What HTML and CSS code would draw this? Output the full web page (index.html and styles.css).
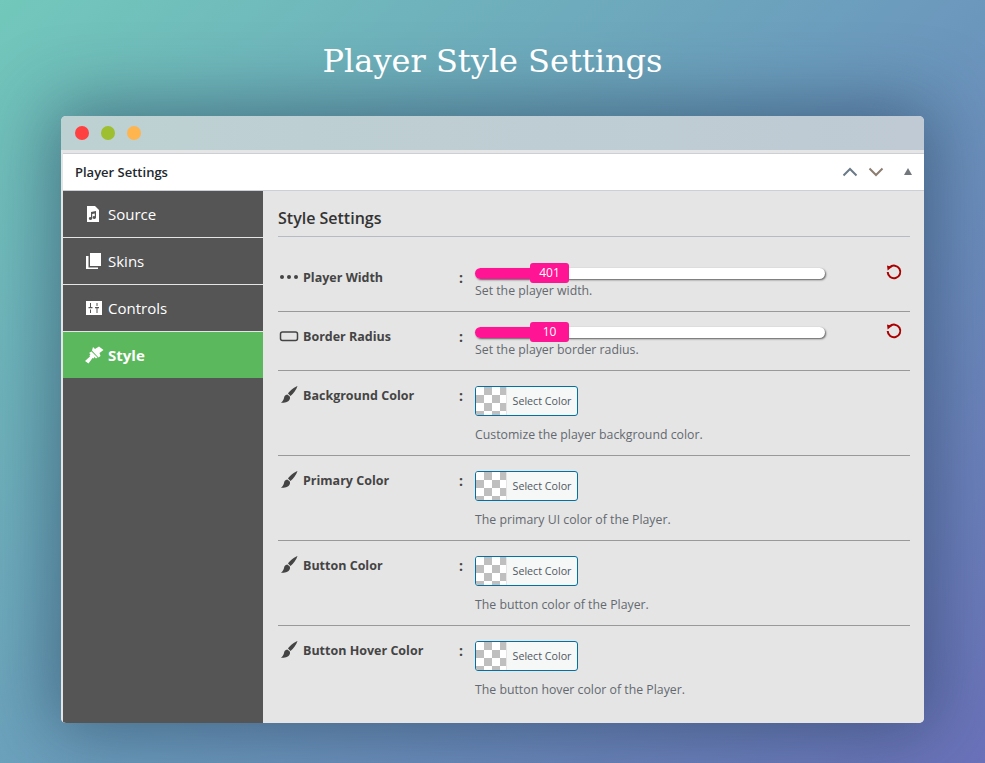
FILE: index.html
```html
<!DOCTYPE html>
<html>
  <head>
    <title>Player Style Settings</title>
    <link rel="stylesheet" href="styles.css">
  </head>
  <body>
    <h1 class="page-title">Player Style Settings</h1>
    <div class="window">
      <div class="titlebar">
        <span class="dot dot-red"></span>
        <span class="dot dot-green"></span>
        <span class="dot dot-yellow"></span>
      </div>
      <div class="panel">
        <div class="panel-head">
          <span class="panel-name">Player Settings</span>
          <svg class="arrow arrow-up" width="16" height="10" viewBox="0 0 16 10"><path d="M1.500 8.500 8 2l6.500 6.500" /></svg>
          <svg class="arrow arrow-down" width="16" height="10" viewBox="0 0 16 10"><path d="M1.500 1.500 8 8l6.500-6.500" /></svg>
          <span class="caret"></span>
        </div>
        <div class="panel-body">
          <ul class="menu">
            <li class="menu-item">
              <span class="menu-icon"><svg width="14" height="16" viewBox="0 0 14 16"><path class="white" d="M1 0h8l4 4v12H1z" /><path class="dark" d="M10 5 5 6v5.200a1.700 1.400 0 1 0 1.200 1.300V8l2.600-.6v2.800a1.700 1.400 0 1 0 1.200 1.300z" /></svg></span>
              Source
            </li>
            <li class="menu-item">
              <span class="menu-icon"><svg width="16" height="17" viewBox="0 0 16 17"><path class="white" d="M4 0h11v13H4z" /><path class="white" d="M0 3h2.500v11.500H12V16H0z" /></svg></span>
              Skins
            </li>
            <li class="menu-item">
              <span class="menu-icon"><svg width="16" height="14" viewBox="0 0 16 14"><path class="white" d="M0 0h16v14H0z" /><path class="dark" d="M4 2h1v4h1.500v1.300h-4V6H4zM4 8.500h1V12H4zM10.500 2h1v3h-1zM9 6h4v1.300h-1.500V12h-1V7.300H9z" /></svg></span>
              Controls
            </li>
            <li class="menu-item menu-active">
              <span class="menu-icon"><svg width="20" height="18" viewBox="0 0 20 18"><path class="white" d="M9 1 11 3l4-2.500L19.500 4l-4 3 1 3-2 1.500L8 4.500zM7.500 5.500l6 6-1.500 1-1.500-1.500-1 1.500-1-.5-4 5.500L1 15l5-4.500-.5-1 1-1.500L5 7z" /></svg></span>
              Style
            </li>
          </ul>
          <div class="content">
            <h2 class="content-title">Style Settings</h2>

            <div class="row row-slider row-first">
              <div class="label">
                <svg class="label-icon" width="20" height="14" viewBox="0 0 20 14"><circle cx="3" cy="7" r="2" /><circle cx="10" cy="7" r="2" /><circle cx="17" cy="7" r="2" /></svg>
                Player Width
              </div>
              <div class="colon">:</div>
              <div class="field">
                <div class="slider">
                  <div class="slider-fill"></div>
                  <div class="slider-handle">401</div>
                </div>
                <p class="desc desc-tight">Set the player width.</p>
              </div>
              <svg class="reset" width="18" height="18" viewBox="0 0 18 18"><path d="M4.600 4.400A6.300 6.300 0 1 1 2.700 9" /><path class="reset-tip" d="M2 2.500 7 4 2.600 7.500z" /></svg>
            </div>

            <div class="row row-slider">
              <div class="label">
                <svg class="label-icon" width="20" height="14" viewBox="0 0 20 14"><rect class="outline" x="1.500" y="3" width="17" height="8.500" rx="2" /></svg>
                Border Radius
              </div>
              <div class="colon">:</div>
              <div class="field">
                <div class="slider">
                  <div class="slider-fill"></div>
                  <div class="slider-handle">10</div>
                </div>
                <p class="desc desc-tight">Set the player border radius.</p>
              </div>
              <svg class="reset" width="18" height="18" viewBox="0 0 18 18"><path d="M4.600 4.400A6.300 6.300 0 1 1 2.700 9" /><path class="reset-tip" d="M2 2.500 7 4 2.600 7.500z" /></svg>
            </div>

            <div class="row row-color">
              <div class="label">
                <svg class="label-icon" width="20" height="18" viewBox="0 0 20 18"><path d="M18.500 0c-3 1-7.500 4.500-9.500 7.500l2.500 2.500c2.800-2.300 6-6.500 7-10zM8.300 8.500C6 8.700 5.300 10.200 5 12c-.3 1.800-1.400 3.300-3 5 3.500 0 7.300-.8 8.600-3.400.7-1.400.5-2.700 0-3.400z" /></svg>
                Background Color
              </div>
              <div class="colon">:</div>
              <div class="field">
                <div class="color-btn"><span class="swatch"></span><span class="color-text">Select Color</span></div>
                <p class="desc">Customize the player background color.</p>
              </div>
            </div>

            <div class="row row-color">
              <div class="label">
                <svg class="label-icon" width="20" height="18" viewBox="0 0 20 18"><path d="M18.500 0c-3 1-7.500 4.500-9.500 7.500l2.500 2.500c2.800-2.300 6-6.500 7-10zM8.300 8.500C6 8.700 5.300 10.200 5 12c-.3 1.800-1.400 3.300-3 5 3.500 0 7.300-.8 8.600-3.400.7-1.400.5-2.700 0-3.400z" /></svg>
                Primary Color
              </div>
              <div class="colon">:</div>
              <div class="field">
                <div class="color-btn"><span class="swatch"></span><span class="color-text">Select Color</span></div>
                <p class="desc">The primary UI color of the Player.</p>
              </div>
            </div>

            <div class="row row-color">
              <div class="label">
                <svg class="label-icon" width="20" height="18" viewBox="0 0 20 18"><path d="M18.500 0c-3 1-7.500 4.500-9.500 7.500l2.500 2.500c2.800-2.300 6-6.500 7-10zM8.300 8.500C6 8.700 5.300 10.200 5 12c-.3 1.800-1.400 3.300-3 5 3.500 0 7.300-.8 8.600-3.400.7-1.400.5-2.700 0-3.400z" /></svg>
                Button Color
              </div>
              <div class="colon">:</div>
              <div class="field">
                <div class="color-btn"><span class="swatch"></span><span class="color-text">Select Color</span></div>
                <p class="desc">The button color of the Player.</p>
              </div>
            </div>

            <div class="row row-color row-last">
              <div class="label">
                <svg class="label-icon" width="20" height="18" viewBox="0 0 20 18"><path d="M18.500 0c-3 1-7.500 4.500-9.500 7.500l2.500 2.500c2.800-2.300 6-6.500 7-10zM8.300 8.500C6 8.700 5.300 10.200 5 12c-.3 1.800-1.400 3.300-3 5 3.500 0 7.300-.8 8.600-3.400.7-1.400.5-2.700 0-3.400z" /></svg>
                Button Hover Color
              </div>
              <div class="colon">:</div>
              <div class="field">
                <div class="color-btn"><span class="swatch"></span><span class="color-text">Select Color</span></div>
                <p class="desc">The button hover color of the Player.</p>
              </div>
            </div>
          </div>
        </div>
      </div>
    </div>
  </body>
</html>
```

FILE: styles.css
```css
body { margin: 0; height: 763px; overflow: hidden; box-sizing: border-box; padding: 44px 61px 0; background: linear-gradient(135deg, #72c8bb 0%, #6c9dbd 50%, #6b72ba 100%); font-family: "Open Sans", "Noto Sans", sans-serif; color: #444; }

.page-title { margin: 0 0 37px; height: 35px; line-height: 35px; text-align: center; font-family: "DejaVu Serif", serif; font-size: 32px; font-weight: 400; color: #fff; }

.window { height: 607px; border-radius: 5px; overflow: hidden; background: #e5e5e5; box-shadow: 0 0 70px 10px rgba(30, 50, 80, 0.5); }
.titlebar { height: 34px; display: flex; align-items: center; gap: 11.700px; padding-left: 14.300px; background: linear-gradient(90deg, #bdd1d2, #bfcad4); }
.dot { width: 14px; height: 14px; border-radius: 50%; }
.dot-red { background: #ff4040; }
.dot-green { background: #9dbf30; }
.dot-yellow { background: #ffb54d; }

.panel { height: 573px; box-sizing: border-box; padding: 3px 0 0 2px; background: #e5e5e5; }
.panel-head { height: 36px; display: flex; align-items: center; background: #fff; border-top: 1px solid #ccd0d4; border-bottom: 1px solid #ccd0d4; padding: 0 12px; }
.panel-name { flex: 1; font-size: 13px; font-weight: 600; color: #23282d; }
.arrow path { fill: none; stroke-width: 2; }
.arrow-up { margin-right: 10px; }
.arrow-up path { stroke: #6b7a88; }
.arrow-down { margin-right: 20px; }
.arrow-down path { stroke: #8c7d70; }
.caret { width: 0; height: 0; border-left: 4px solid transparent; border-right: 4px solid transparent; border-bottom: 7px solid #72777c; margin-bottom: 2px; }

.panel-body { display: flex; height: 532px; }
.menu { width: 200px; margin: 0; padding: 0; list-style-type: none; background: #555; flex-shrink: 0; }
.menu-item { height: 46px; display: flex; align-items: center; padding-left: 23px; border-bottom: 1px solid #e5e5e5; font-size: 15px; color: #fff; }
.menu-icon { width: 22px; display: flex; align-items: center; flex-shrink: 0; }
.menu-active { background: #5cb85c; font-weight: 700; border-bottom: 0; padding-left: 21px; }
.menu-active .menu-icon { width: 24px; }
.white { fill: #fff; }
.dark { fill: #555; }

.content { flex: 1; padding: 0 14px 0 15px; }
.content-title { margin: 0; height: 45px; line-height: 54px; border-bottom: 1px solid #b5bac5; font-size: 16px; font-weight: 600; color: #333; }

.row { display: flex; align-items: flex-start; border-bottom: 1px solid #999; }
.row-slider { height: 58px; }
.row-first { padding-top: 16px; }
.row-color { height: 84px; }
.row-last { border-bottom: 0; }

.label { width: 181px; height: 20px; margin-top: 14px; display: flex; align-items: center; gap: 4px; font-size: 12.500px; font-weight: 700; color: #444; flex-shrink: 0; }
.label-icon { fill: #444; flex-shrink: 0; margin-left: 1px; }
.outline { fill: none; stroke: #444; stroke-width: 1.500; }
.colon { width: 16px; margin-top: 15px; font-size: 14px; font-weight: 700; line-height: 20px; color: #444; flex-shrink: 0; }
.field { width: 350px; margin-top: 15px; flex-shrink: 0; }
.row-slider .field { margin-top: 14px; }

.slider { height: 11px; margin-top: 1px; border-radius: 6px; background: #fff; box-shadow: 1px 1px 2px rgba(0, 0, 0, 0.6); position: relative; }
.slider-fill { width: 65px; height: 11px; border-radius: 6px 0 0 6px; background: #ff1493; }
.slider-handle { position: absolute; left: 55px; top: -5px; width: 39px; height: 20px; border-radius: 3px; background: #ff1493; color: #fff; font-size: 12px; line-height: 20px; text-align: center; }

.desc { margin: 10px 0 0; font-size: 12.300px; line-height: 18px; color: #646970; }
.desc-tight { margin-top: 3px; }

.color-btn { width: 101px; height: 28px; display: flex; border: 1px solid #0071a1; border-radius: 3px; overflow: hidden; background: #f6f7f7; }
.swatch { width: 30px; height: 28px; background: repeating-conic-gradient(#bfbfbf 0 25%, #fff 0 50%) 0 0 / 16px 16px; border-right: 1px solid #e5e5e5; }
.color-text { flex: 1; text-align: center; font-size: 10.700px; line-height: 28px; color: #50575e; }

.reset { margin: 10px 0 0 60px; flex-shrink: 0; fill: none; stroke: #a00; stroke-width: 2; }
.reset-tip { fill: #a00; stroke: none; }
```
